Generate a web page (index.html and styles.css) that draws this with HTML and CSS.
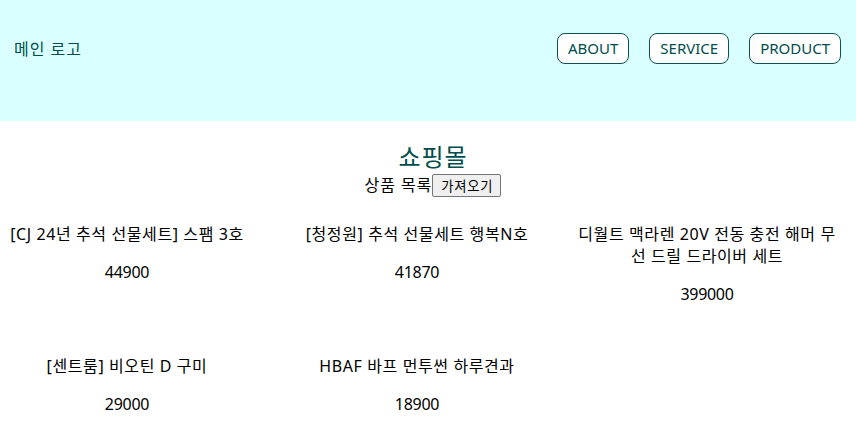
FILE: index.html
```html
<!DOCTYPE html>
<html lang="ko">
<head>
<meta charset="utf-8">
<title>쇼핑몰</title>
<link rel="stylesheet" href="styles.css">
</head>
<body>
<header class="header">
  <div class="logo">메인 로고</div>
  <nav class="nav">
    <button class="nav-btn">ABOUT</button>
    <button class="nav-btn">SERVICE</button>
    <button class="nav-btn">PRODUCT</button>
  </nav>
</header>
<main class="main">
  <h1 class="title">쇼핑몰</h1>
  <div class="list-head">상품 목록<button class="fetch-btn">가져오기</button></div>
  <section class="grid">
    <div class="item"><p class="name">[CJ 24년 추석 선물세트] 스팸 3호</p><p class="price">44900</p></div>
    <div class="item"><p class="name">[청정원] 추석 선물세트 행복N호</p><p class="price">41870</p></div>
    <div class="item"><p class="name">디월트 맥라렌 20V 전동 충전 해머 무선 드릴 드라이버 세트</p><p class="price">399000</p></div>
    <div class="item"><p class="name">[센트룸] 비오틴 D 구미</p><p class="price">29000</p></div>
    <div class="item"><p class="name">HBAF 바프 먼투썬 하루견과</p><p class="price">18900</p></div>
  </section>
</main>
</body>
</html>
```

FILE: styles.css
```css
html, body {
  margin: 0;
  padding: 0;
  background: #ffffff;
}
body {
  font-family: "Noto Sans", "Noto Sans CJK KR", sans-serif;
  font-size: 16px;
  color: #000;
}
.header {
  background: #d9ffff;
  height: 121px;
  box-sizing: border-box;
  padding: 33px 15px 57px 14px;
  display: flex;
  justify-content: space-between;
  align-items: center;
}
.logo {
  color: #004d4d;
  font-size: 16px;
  line-height: 22px;
  letter-spacing: 1px;
}
.nav {
  display: flex;
  gap: 20px;
}
.nav-btn {
  font-family: "Noto Sans", "Noto Sans CJK KR", sans-serif;
  font-size: 15px;
  color: #004d4d;
  background: #ffffff;
  border: 1px solid #0b5252;
  border-radius: 8px;
  height: 31px;
  padding: 0 10px;
  line-height: 29px;
  cursor: pointer;
}
.main {
  text-align: center;
  padding-left: 10px;
}
.title {
  margin: 0;
  padding-top: 20px;
  font-size: 24px;
  font-weight: 400;
  line-height: 32px;
  color: #004d4d;
  letter-spacing: 1px;
}
.list-head {
  line-height: 24px;
  height: 24px;
  letter-spacing: 0.9px;
}
.fetch-btn {
  font-family: "Noto Sans CJK KR", sans-serif;
  font-size: 13.33px;
  letter-spacing: 0.8px;
  color: #000;
  background: #efefef;
  border: 1px solid #767676;
  border-radius: 2px;
  height: 23px;
  padding: 0 7px 0 8px;
  vertical-align: middle;
  line-height: 20px;
  position: relative;
  top: -1px;
}
.grid {
  display: grid;
  grid-template-columns: repeat(3, 270px);
  column-gap: 20px;
  row-gap: 18px;
  margin-top: 10px;
  margin-left: -18px;
}
.item p {
  margin: 16px 0;
  line-height: 22px;
}
.name {
  letter-spacing: 0.6px;
}
.price {
  letter-spacing: -0.3px;
}
```
